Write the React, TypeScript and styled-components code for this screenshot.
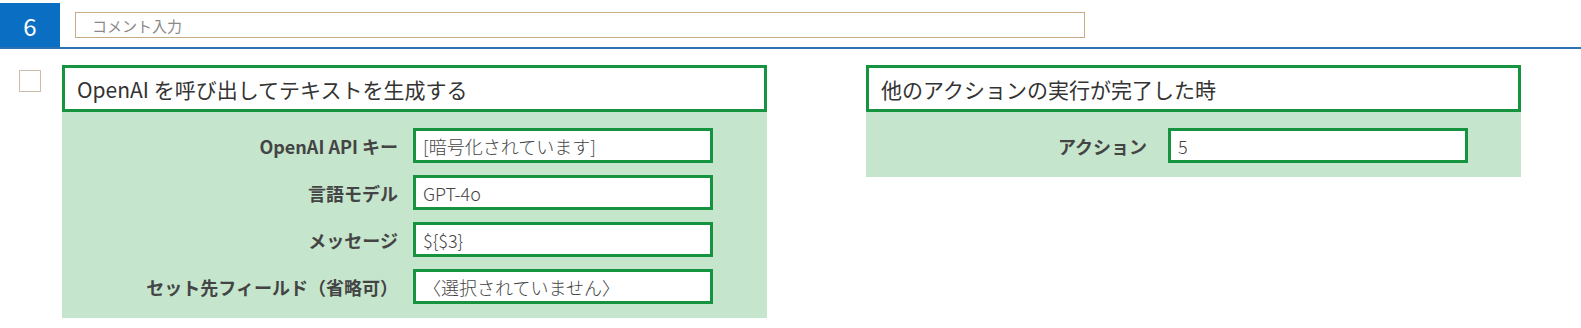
import styled, { createGlobalStyle } from "styled-components";

const GlobalStyle = createGlobalStyle`
  body {
    margin: 0;
    background: #fff;
    font-family: "Noto Sans CJK JP", "Noto Sans", sans-serif;
  }
`;

type Field = { label: string; value: string };

const openAiFields: Field[] = [
  { label: "OpenAI API キー", value: "[暗号化されています]" },
  { label: "言語モデル", value: "GPT-4o" },
  { label: "メッセージ", value: "${$3}" },
  { label: "セット先フィールド（省略可）", value: "〈選択されていません〉" },
];

const triggerFields: Field[] = [{ label: "アクション", value: "5" }];

function ActionCard({
  title,
  fields,
  width,
  labelCol,
  labelGap,
}: {
  title: string;
  fields: Field[];
  width: number;
  labelCol: number;
  labelGap: number;
}) {
  return (
    <Card $width={width}>
      <CardTitle>{title}</CardTitle>
      <CardBody $labelCol={labelCol}>
        {fields.map((f) => (
          <FieldRow key={f.label}>
            <FieldLabel $gap={labelGap}>{f.label}</FieldLabel>
            <FieldValue>{f.value}</FieldValue>
          </FieldRow>
        ))}
      </CardBody>
    </Card>
  );
}

function App() {
  return (
    <>
      <GlobalStyle />
      <TopBar>
        <StepNumber>6</StepNumber>
        <CommentInput placeholder="コメント入力" />
      </TopBar>
      <Content>
        <CheckBox />
        <ActionCard
          title="OpenAI を呼び出してテキストを生成する"
          fields={openAiFields}
          width={705}
          labelCol={351}
          labelGap={15}
        />
        <RightColumn>
          <ActionCard
            title="他のアクションの実行が完了した時"
            fields={triggerFields}
            width={655}
            labelCol={302}
            labelGap={21}
          />
        </RightColumn>
      </Content>
    </>
  );
}

const TopBar = styled.div`
  display: flex;
  align-items: flex-start;
  padding-top: 3px;
  border-bottom: 2px solid #2b72b4;
`;

const StepNumber = styled.div`
  width: 60px;
  height: 44px;
  background: #0a6fc2;
  color: #fff;
  font-size: 24px;
  display: flex;
  align-items: center;
  justify-content: center;
`;

const CommentInput = styled.input`
  box-sizing: border-box;
  margin: 9px 0 0 15px;
  width: 1010px;
  height: 26px;
  border: 1px solid #c9ab88;
  padding: 0 0 0 16px;
  font-family: inherit;
  font-size: 15px;
  color: #555;
  outline: none;

  &::placeholder {
    color: #8a8a8a;
  }
`;

const Content = styled.div`
  display: flex;
  align-items: flex-start;
  padding-top: 16px;
`;

const CheckBox = styled.div`
  box-sizing: border-box;
  width: 22px;
  height: 22px;
  margin: 5px 21px 0 19px;
  border: 1px solid #cdbcab;
  background: #fff;
`;

const RightColumn = styled.div`
  margin-left: 99px;
`;

const Card = styled.div<{ $width: number }>`
  width: ${(p) => p.$width}px;
  background: #c5e5cd;
`;

const CardTitle = styled.div`
  box-sizing: border-box;
  height: 47px;
  border: 3px solid #16933f;
  background: #fff;
  padding-left: 12px;
  display: flex;
  align-items: center;
  font-size: 21px;
  color: #333;
`;

const CardBody = styled.div<{ $labelCol: number }>`
  display: grid;
  grid-template-columns: ${(p) => p.$labelCol}px 300px;
  row-gap: 12px;
  padding: 16px 0 14px;
`;

const FieldRow = styled.div`
  display: contents;
`;

const FieldLabel = styled.div<{ $gap: number }>`
  display: flex;
  align-items: center;
  justify-content: flex-end;
  padding-right: ${(p) => p.$gap}px;
  font-size: 18px;
  font-weight: 700;
  color: #444;
`;

const FieldValue = styled.div`
  box-sizing: border-box;
  height: 35px;
  border: 3px solid #16933f;
  background: #fff;
  padding-left: 7px;
  display: flex;
  align-items: center;
  font-size: 18px;
  font-weight: 300;
  color: #444;
  white-space: nowrap;
`;

export default App;
